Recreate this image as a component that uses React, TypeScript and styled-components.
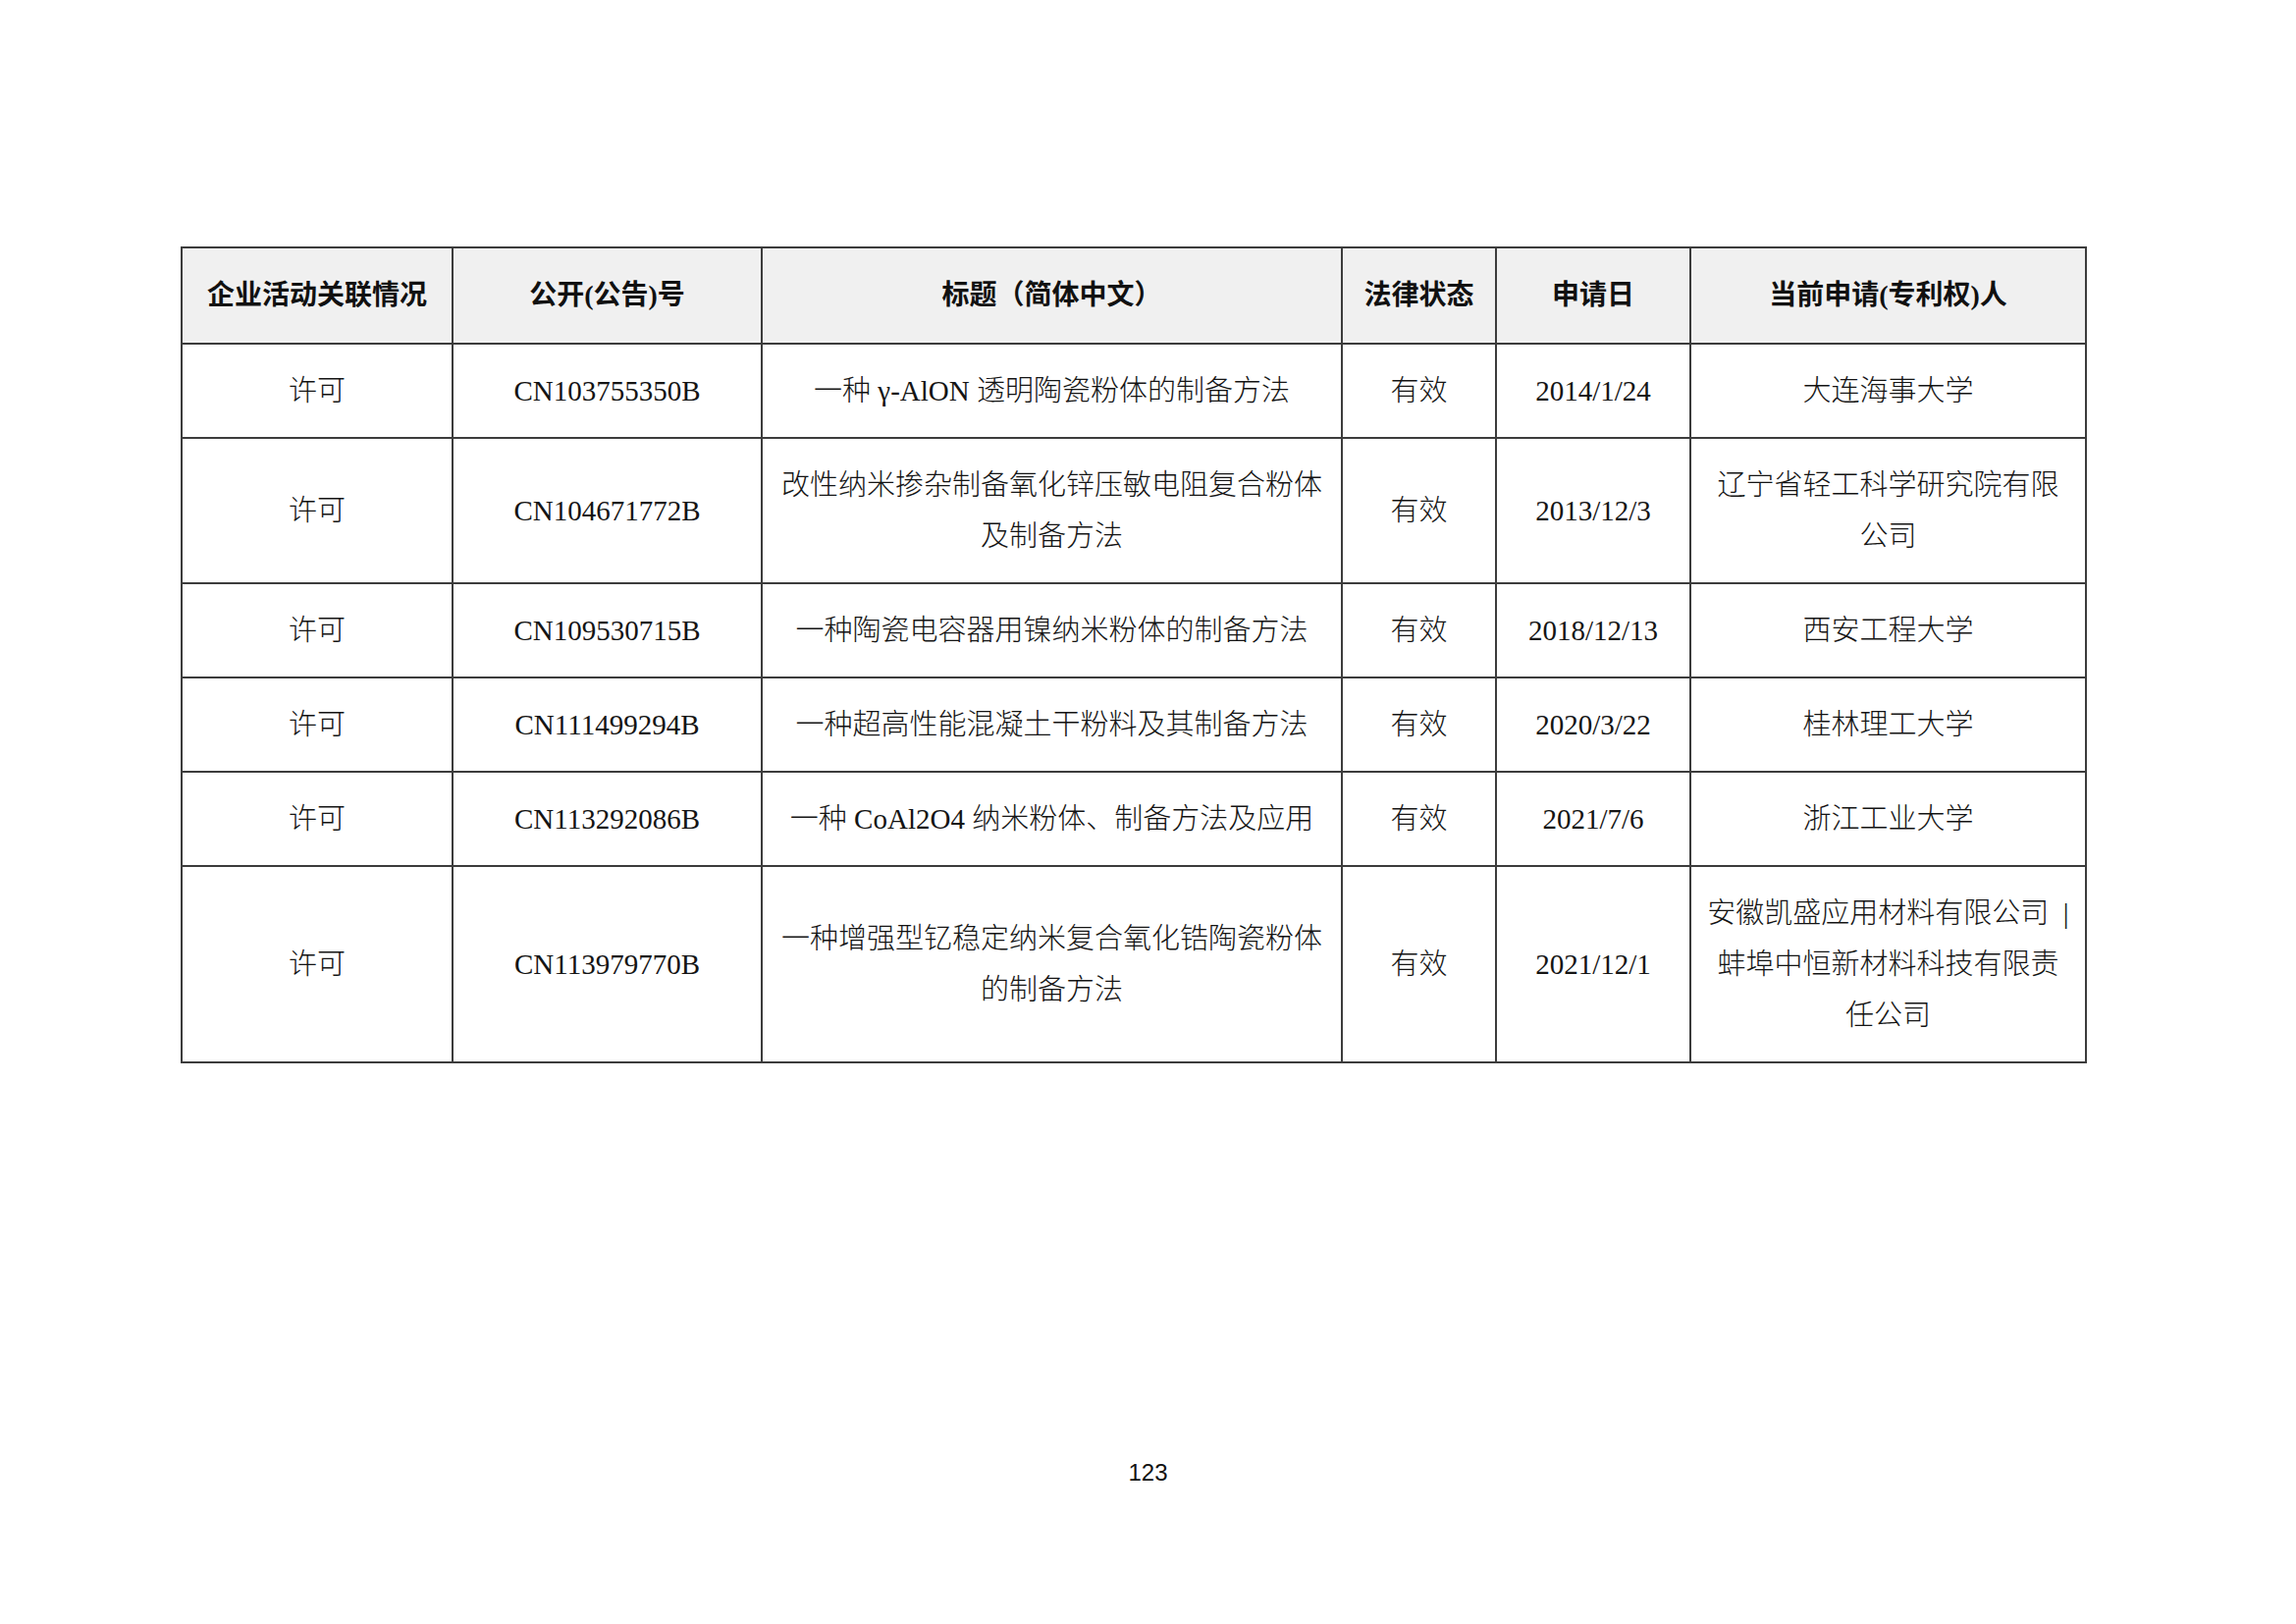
import React from 'react';
import styled, { createGlobalStyle } from 'styled-components';

type PatentRow = {
  relation: string;
  number: string;
  title: string;
  status: string;
  date: string;
  owner: string;
};

const rows: PatentRow[] = [
  { relation: '许可', number: 'CN103755350B', title: '一种 γ-AlON 透明陶瓷粉体的制备方法', status: '有效', date: '2014/1/24', owner: '大连海事大学' },
  { relation: '许可', number: 'CN104671772B', title: '改性纳米掺杂制备氧化锌压敏电阻复合粉体及制备方法', status: '有效', date: '2013/12/3', owner: '辽宁省轻工科学研究院有限公司' },
  { relation: '许可', number: 'CN109530715B', title: '一种陶瓷电容器用镍纳米粉体的制备方法', status: '有效', date: '2018/12/13', owner: '西安工程大学' },
  { relation: '许可', number: 'CN111499294B', title: '一种超高性能混凝土干粉料及其制备方法', status: '有效', date: '2020/3/22', owner: '桂林理工大学' },
  { relation: '许可', number: 'CN113292086B', title: '一种 CoAl2O4 纳米粉体、制备方法及应用', status: '有效', date: '2021/7/6', owner: '浙江工业大学' },
  { relation: '许可', number: 'CN113979770B', title: '一种增强型钇稳定纳米复合氧化锆陶瓷粉体的制备方法', status: '有效', date: '2021/12/1', owner: '安徽凯盛应用材料有限公司\u2002| 蚌埠中恒新材料科技有限责任公司' },
];

const columns = [
  { label: '企业活动关联情况', width: 276 },
  { label: '公开(公告)号', width: 315 },
  { label: '标题（简体中文）', width: 591 },
  { label: '法律状态', width: 157 },
  { label: '申请日', width: 198 },
  { label: '当前申请(专利权)人', width: 403 },
];

const GlobalStyle = createGlobalStyle`
  html, body {
    margin: 0;
    padding: 0;
    background: #ffffff;
  }
`;

const Page = styled.div`
  width: 2339px;
  height: 1654px;
  box-sizing: border-box;
  padding: 251px 0 0 184px;
  background: #ffffff;
  font-family: "Liberation Serif", "Noto Sans CJK SC", serif;
  color: #141414;
`;

const Table = styled.table`
  width: 1940px;
  table-layout: fixed;
  border-collapse: collapse;
  border: 2px solid #3c3c3c;
`;

const HeadCell = styled.th<{ $width: number }>`
  box-sizing: border-box;
  width: ${(p) => p.$width}px;
  background: #f0f0f0;
  border: 2px solid #3c3c3c;
  padding: 22px 12px;
  font-family: "Liberation Serif", "Noto Sans CJK SC", sans-serif;
  font-size: 28px;
  font-weight: 700;
  line-height: 52px;
  text-align: center;
  color: #111111;
`;

const Cell = styled.td`
  box-sizing: border-box;
  border: 2px solid #3c3c3c;
  padding: 21px 13px;
  font-size: 29px;
  font-weight: 300;
  line-height: 52px;
  text-align: center;
  vertical-align: middle;
  word-break: break-all;
`;

const Footer = styled.div`
  width: 2339px;
  margin: 402px 0 0 -184px;
  text-align: center;
  font-family: "Liberation Sans", sans-serif;
  font-size: 24px;
  line-height: 30px;
  color: #111111;
`;

const App: React.FC = () => {
  return (
    <>
      <GlobalStyle />
      <Page>
        <Table>
          <thead>
            <tr>
              {columns.map((c) => (
                <HeadCell key={c.label} $width={c.width}>{c.label}</HeadCell>
              ))}
            </tr>
          </thead>
          <tbody>
            {rows.map((r) => (
              <tr key={r.number}>
                <Cell>{r.relation}</Cell>
                <Cell>{r.number}</Cell>
                <Cell>{r.title}</Cell>
                <Cell>{r.status}</Cell>
                <Cell>{r.date}</Cell>
                <Cell>{r.owner}</Cell>
              </tr>
            ))}
          </tbody>
        </Table>
        <Footer>123</Footer>
      </Page>
    </>
  );
};

export default App;
